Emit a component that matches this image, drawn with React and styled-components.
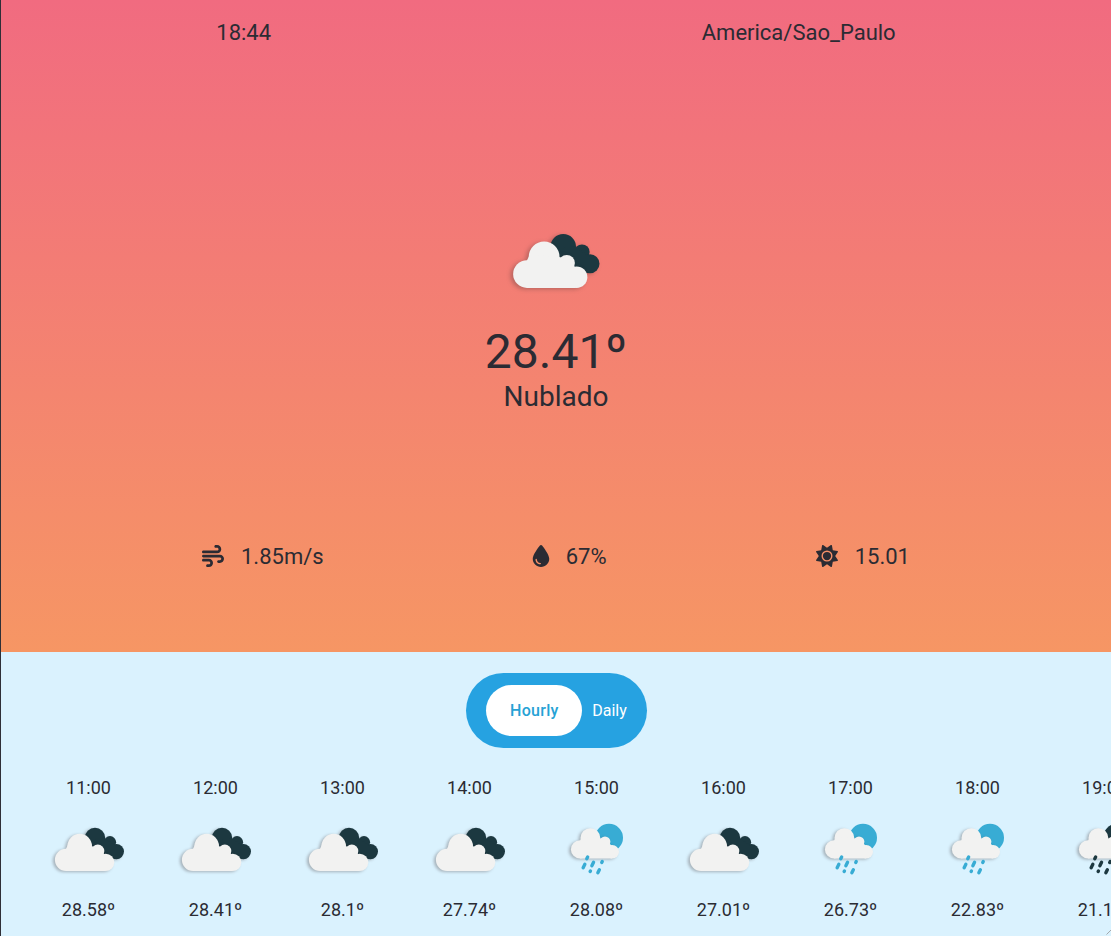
import React from "react";
import styled, { createGlobalStyle } from "styled-components";
import { FaWind, FaDroplet, FaSun } from "react-icons/fa6";

const GlobalStyle = createGlobalStyle`
  * { box-sizing: border-box; margin: 0; padding: 0; }
  body { background: #daf2fe; color: #2b2b33; font-family: Roboto, sans-serif; overflow: hidden; }
  button { font: inherit; border: 0; background: none; }
`;

const Page = styled.div`
  position: relative;
  height: 936px;
  border-left: 1px solid #2f2f37;
  overflow: hidden;
  display: flex;
  flex-direction: column;
`;

const Current = styled.section`
  height: 652px;
  flex: none;
  display: flex;
  flex-direction: column;
  font-size: 22px;
  line-height: 26px;
  background: linear-gradient(#f16b80, #f69664);
`;

const TopBar = styled.header`
  display: flex;
  justify-content: space-around;
  padding-top: 20px;
`;

const Summary = styled.div`
  display: flex;
  flex-direction: column;
  align-items: center;
  margin-top: 153px;
`;

const Temperature = styled.h1`
  font-size: 48px;
  font-weight: 400;
  line-height: 56px;
`;

const Condition = styled.p`
  font-size: 28px;
  line-height: 33px;
`;

const Stats = styled.div`
  display: flex;
  justify-content: space-between;
  padding: 0 201px;
  margin-top: 131px;
`;

const Stat = styled.div`
  display: flex;
  align-items: center;
  gap: ${(p) => (p.$narrow ? "14px" : "17px")};
  margin-right: ${(p) => (p.$narrow ? "3px" : "0")};
  svg {
    width: auto;
    height: 22px;
    margin-top: -3px;
  }
`;

const Forecast = styled.section`
  flex: 1;
  min-height: 0;
  display: flex;
  flex-direction: column;
  align-items: center;
  padding-top: 21px;
`;

const Toggle = styled.div`
  display: flex;
  align-items: center;
  gap: 10px;
  width: 181px;
  height: 75px;
  padding: 12px 20px;
  border-radius: 38px;
  background: #26a2e1;
  font-size: 16px;
`;

const ToggleOption = styled.button`
  height: 51px;
  padding: ${(p) => (p.$active ? "0 23.5px 0 24.5px" : "0")};
  border-radius: 26px;
  background: ${(p) => (p.$active ? "#fff" : "transparent")};
  color: ${(p) => (p.$active ? "#26a2d5" : "#fff")};
  font-weight: ${(p) => (p.$active ? 500 : 400)};
  letter-spacing: ${(p) => (p.$active ? "0.3px" : "0")};
`;

const Hours = styled.div`
  align-self: stretch;
  display: flex;
  padding: 29px 0 0 24px;
  overflow: hidden;
`;

const Hour = styled.div`
  flex: none;
  width: 127px;
  display: flex;
  flex-direction: column;
  align-items: center;
  font-size: 18px;
  line-height: 22px;
`;

const Icon = styled.svg`
  display: block;
  width: ${(p) => p.$size}px;
  height: ${(p) => p.$size}px;
`;

const Shaded = styled.g`
  filter: drop-shadow(-1.2px 1.8px 1.5px rgba(60, 50, 50, 0.33));
`;

const Corner = styled.svg`
  position: absolute;
  right: 0;
  bottom: 0;
  width: 6px;
  height: 6px;
`;

const DARK = "#1c3840";
const BLUE = "#38acd4";

function Clouds({ size, box = "1 -0.8 100 100" }) {
  return (
    <Icon $size={size} viewBox={box}>
      <Shaded fill={DARK}>
        <circle cx="57" cy="38.2" r="10.2" />
        <circle cx="72" cy="42.4" r="6.1" />
        <circle cx="78.4" cy="51.8" r="7.6" />
        <path d="M52 40L66 38L78 46L78 59L62 59Z" />
      </Shaded>
      <Shaded fill="#f2f2f1">
        <circle cx="28" cy="60" r="11.1" />
        <circle cx="41.7" cy="46.3" r="12.3" />
        <circle cx="59.8" cy="51.2" r="6.5" />
        <circle cx="67.7" cy="62.5" r="8.6" />
        <path d="M28 49L30 45L53 46L62 50L67 55V71.1H28Z" />
      </Shaded>
    </Icon>
  );
}

const DROPS = [
  [41.2, 58, 0.9],
  [38, 66.2, 1.7],
  [46.7, 64.2, 1.7],
  [44.3, 71.4, 0.3],
  [56, 62.3, 0.5],
  [52.6, 71.5, 1.5],
];

function Rain({ night }) {
  const tone = night ? DARK : BLUE;
  return (
    <Icon $size={100} viewBox="1 -0.8 100 100">
      <circle cx="63" cy="38" r="14" fill={tone} />
      <Shaded fill="#f2f2f1">
        <circle cx="34" cy="49.6" r="9.1" />
        <circle cx="44.4" cy="38.3" r="9.9" />
        <circle cx="59" cy="42" r="5.4" />
        <circle cx="66.2" cy="52" r="6.8" />
        <path d="M34 41L36 37L53 38L60 41L66 46V58.8H34Z" />
      </Shaded>
      <g stroke={tone} strokeWidth="3.4" strokeLinecap="round">
        {DROPS.map(([x, y, l]) => (
          <line key={x} x1={x + l * 0.5} y1={y - l} x2={x - l * 0.5} y2={y + l} />
        ))}
      </g>
    </Icon>
  );
}

const hours = [
  ["11:00", "28.58º", "clouds"],
  ["12:00", "28.41º", "clouds"],
  ["13:00", "28.1º", "clouds"],
  ["14:00", "27.74º", "clouds"],
  ["15:00", "28.08º", "rain"],
  ["16:00", "27.01º", "clouds"],
  ["17:00", "26.73º", "rain"],
  ["18:00", "22.83º", "rain"],
  ["19:00", "21.14º", "night"],
];

export default function App() {
  return (
    <>
      <GlobalStyle />
      <Page>
        <Current>
          <TopBar>
            <span>18:44</span>
            <span>America/Sao_Paulo</span>
          </TopBar>
          <Summary>
            <Clouds size={125} box="1.6 0 100 100" />
            <Temperature>28.41º</Temperature>
            <Condition>Nublado</Condition>
          </Summary>
          <Stats>
            <Stat><FaWind /> 1.85m/s</Stat>
            <Stat $narrow><FaDroplet /> 67%</Stat>
            <Stat><FaSun /> 15.01</Stat>
          </Stats>
        </Current>
        <Forecast>
          <Toggle>
            <ToggleOption $active>Hourly</ToggleOption>
            <ToggleOption>Daily</ToggleOption>
          </Toggle>
          <Hours>
            {hours.map(([time, temp, kind]) => (
              <Hour key={time}>
                <span>{time}</span>
                {kind === "clouds" ? <Clouds size={100} /> : <Rain night={kind === "night"} />}
                <span>{temp}</span>
              </Hour>
            ))}
          </Hours>
        </Forecast>
        <Corner viewBox="0 0 6 6">
          <path d="M1.5 4.5L6 0" stroke="#a3a9ad" strokeWidth="1" />
        </Corner>
      </Page>
    </>
  );
}
